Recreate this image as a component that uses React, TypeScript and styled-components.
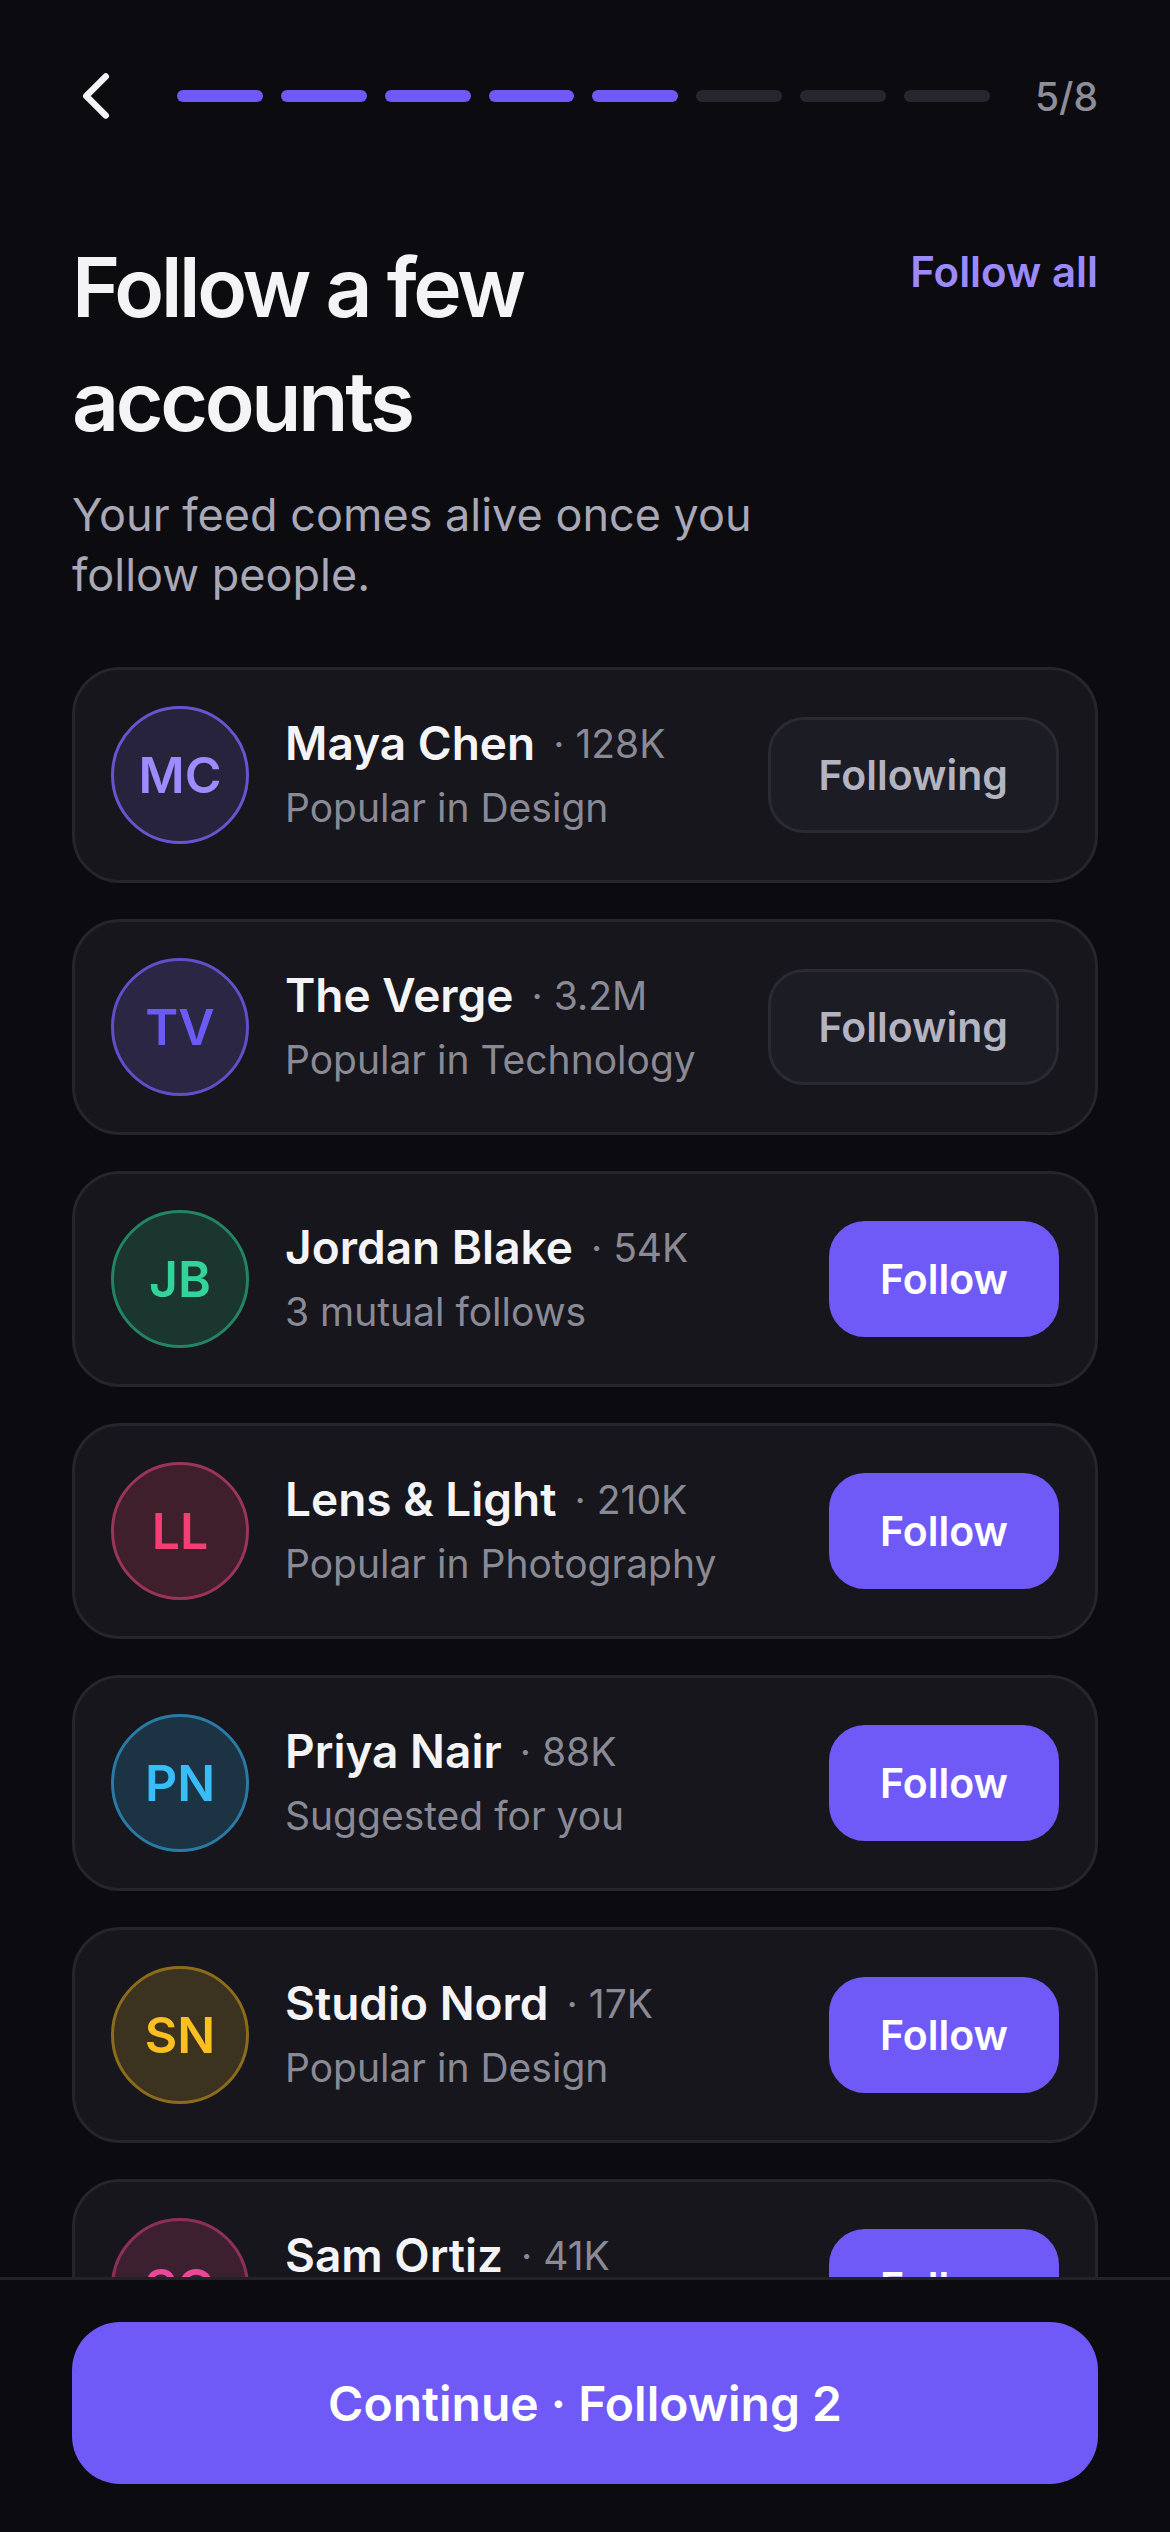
import * as React from 'react';
import styled, { createGlobalStyle } from 'styled-components';
import { ChevronLeft } from 'lucide-react';

interface Account {
    initials: string;
    name: string;
    count: string;
    reason: string;
    following: boolean;
    tone: 'violet' | 'indigo' | 'green' | 'rose' | 'sky' | 'amber' | 'pink';
}

const tones: Record<Account['tone'], { bg: string; border: string; text: string }> = {
    violet: { bg: '#28233d', border: '#6655cf', text: '#9d8cff' },
    indigo: { bg: '#2a2644', border: '#5f50c8', text: '#6c5af5' },
    green: { bg: '#1b352f', border: '#238463', text: '#34d39a' },
    rose: { bg: '#3f1f2c', border: '#9a3458', text: '#f43f75' },
    sky: { bg: '#1c3344', border: '#2a7aa6', text: '#38bdf8' },
    amber: { bg: '#3b3220', border: '#8c6b1a', text: '#fbbf24' },
    pink: { bg: '#3d2030', border: '#8e2f5a', text: '#ec4899' }
};

const accounts: Account[] = [
    { initials: 'MC', name: 'Maya Chen', count: '128K', reason: 'Popular in Design', following: true, tone: 'violet' },
    { initials: 'TV', name: 'The Verge', count: '3.2M', reason: 'Popular in Technology', following: true, tone: 'indigo' },
    { initials: 'JB', name: 'Jordan Blake', count: '54K', reason: '3 mutual follows', following: false, tone: 'green' },
    { initials: 'LL', name: 'Lens & Light', count: '210K', reason: 'Popular in Photography', following: false, tone: 'rose' },
    { initials: 'PN', name: 'Priya Nair', count: '88K', reason: 'Suggested for you', following: false, tone: 'sky' },
    { initials: 'SN', name: 'Studio Nord', count: '17K', reason: 'Popular in Design', following: false, tone: 'amber' },
    { initials: 'SO', name: 'Sam Ortiz', count: '41K', reason: '2 mutual follows', following: false, tone: 'pink' }
];

const GlobalStyle = createGlobalStyle`
    html, body {
        margin: 0;
        padding: 0;
        background: #0b0b10;
    }
    * {
        box-sizing: border-box;
    }
    body {
        font-family: Inter, 'Noto Sans', 'Liberation Sans', sans-serif;
        -webkit-font-smoothing: antialiased;
    }
`;

const Screen = styled.div`
    display: flex;
    flex-direction: column;
    width: 1170px;
    height: 100vh;
    background: #0b0b10;
    overflow: hidden;
`;

const Header = styled.header`
    display: flex;
    align-items: center;
    gap: 42px;
    height: 135px;
    padding: 57px 72px 0 57px;
    flex-shrink: 0;
`;

const BackButton = styled.button`
    display: flex;
    align-items: center;
    justify-content: center;
    width: 78px;
    height: 78px;
    padding: 0;
    border: none;
    background: transparent;
    color: #f4f4f7;
    cursor: pointer;
`;

const Progress = styled.div`
    display: flex;
    flex: 1;
    gap: 18px;
`;

const Segment = styled.div<{ done: boolean }>`
    flex: 1;
    height: 12px;
    border-radius: 6px;
    background: ${(props) => (props.done ? '#6f5af7' : '#26262f')};
`;

const StepCount = styled.span`
    margin-left: 3px;
    font-size: 39px;
    font-weight: 500;
    color: #8e8e9a;
    line-height: 1;
`;

const Scroll = styled.main`
    flex: 1;
    overflow: hidden;
    padding: 0 72px;
`;

const TitleRow = styled.div`
    display: flex;
    align-items: flex-start;
    justify-content: space-between;
    margin-top: 96px;
`;

const Title = styled.h1`
    max-width: 620px;
    margin: 0;
    font-size: 82px;
    line-height: 114px;
    font-weight: 600;
    letter-spacing: -3.3px;
    color: #f4f4f7;
`;

const FollowAll = styled.button`
    margin-top: 11px;
    padding: 0;
    border: none;
    background: transparent;
    font-family: inherit;
    font-size: 42px;
    line-height: 60px;
    font-weight: 600;
    color: #9b8afb;
    cursor: pointer;
`;

const Subtitle = styled.p`
    max-width: 780px;
    margin: 26px 0 0;
    font-size: 45px;
    line-height: 60px;
    color: #a8a8b6;
`;

const List = styled.div`
    display: flex;
    flex-direction: column;
    gap: 36px;
    margin-top: 62px;
`;

const Card = styled.div`
    display: flex;
    align-items: center;
    gap: 36px;
    padding: 36px;
    border: 3px solid #25252d;
    border-radius: 48px;
    background: #16161c;
`;

const Avatar = styled.div<{ tone: Account['tone'] }>`
    display: flex;
    align-items: center;
    justify-content: center;
    flex-shrink: 0;
    width: 138px;
    height: 138px;
    border-radius: 50%;
    border: 3px solid ${(props) => tones[props.tone].border};
    background: ${(props) => tones[props.tone].bg};
    color: ${(props) => tones[props.tone].text};
    font-size: 50px;
    font-weight: 600;
`;

const Info = styled.div`
    flex: 1;
    min-width: 0;
`;

const NameRow = styled.div`
    display: flex;
    align-items: center;
`;

const Name = styled.span`
    font-size: 46px;
    line-height: 57px;
    font-weight: 600;
    color: #f4f4f6;
`;

const Count = styled.span`
    margin-left: 18px;
    font-size: 39px;
    line-height: 57px;
    color: #8a8a96;
`;

const Reason = styled.div`
    margin-top: 9px;
    font-size: 39px;
    line-height: 54px;
    color: #8a8a96;
    white-space: nowrap;
`;

const FollowButton = styled.button<{ following: boolean }>`
    flex-shrink: 0;
    height: 116px;
    padding: 0 48px;
    border: 3px solid ${(props) => (props.following ? '#2a2a33' : '#6f5af7')};
    border-radius: 36px;
    background: ${(props) => (props.following ? '#1c1c24' : '#6f5af7')};
    color: ${(props) => (props.following ? '#b3b3c2' : '#ffffff')};
    font-family: inherit;
    font-size: 41px;
    font-weight: 600;
    cursor: pointer;
`;

const Footer = styled.footer`
    flex-shrink: 0;
    padding: 42px 72px 48px;
    border-top: 3px solid #22222a;
    background: #0b0b10;
`;

const ContinueButton = styled.button`
    width: 100%;
    height: 162px;
    border: none;
    border-radius: 48px;
    background: #6f5af7;
    color: #ffffff;
    font-family: inherit;
    font-size: 48px;
    font-weight: 600;
    cursor: pointer;
`;

function AccountCard({ account }: { account: Account }) {
    return (
        <Card>
            <Avatar tone={account.tone}>{account.initials}</Avatar>
            <Info>
                <NameRow>
                    <Name>{account.name}</Name>
                    <Count>· {account.count}</Count>
                </NameRow>
                <Reason>{account.reason}</Reason>
            </Info>
            <FollowButton following={account.following}>
                {account.following ? 'Following' : 'Follow'}
            </FollowButton>
        </Card>
    );
}

export default function App() {
    const step = 5;
    const total = 8;
    const followingCount = accounts.filter((a) => a.following).length;

    return (
        <Screen>
            <GlobalStyle />
            <Header>
                <BackButton aria-label="Back">
                    <ChevronLeft size={78} strokeWidth={2} />
                </BackButton>
                <Progress>
                    {Array.from({ length: total }, (_, i) => (
                        <Segment key={i} done={i < step} />
                    ))}
                </Progress>
                <StepCount>
                    {step}/{total}
                </StepCount>
            </Header>
            <Scroll>
                <TitleRow>
                    <Title>Follow a few accounts</Title>
                    <FollowAll>Follow all</FollowAll>
                </TitleRow>
                <Subtitle>Your feed comes alive once you follow people.</Subtitle>
                <List>
                    {accounts.map((account) => (
                        <AccountCard key={account.initials} account={account} />
                    ))}
                </List>
            </Scroll>
            <Footer>
                <ContinueButton>Continue · Following {followingCount}</ContinueButton>
            </Footer>
        </Screen>
    );
}
